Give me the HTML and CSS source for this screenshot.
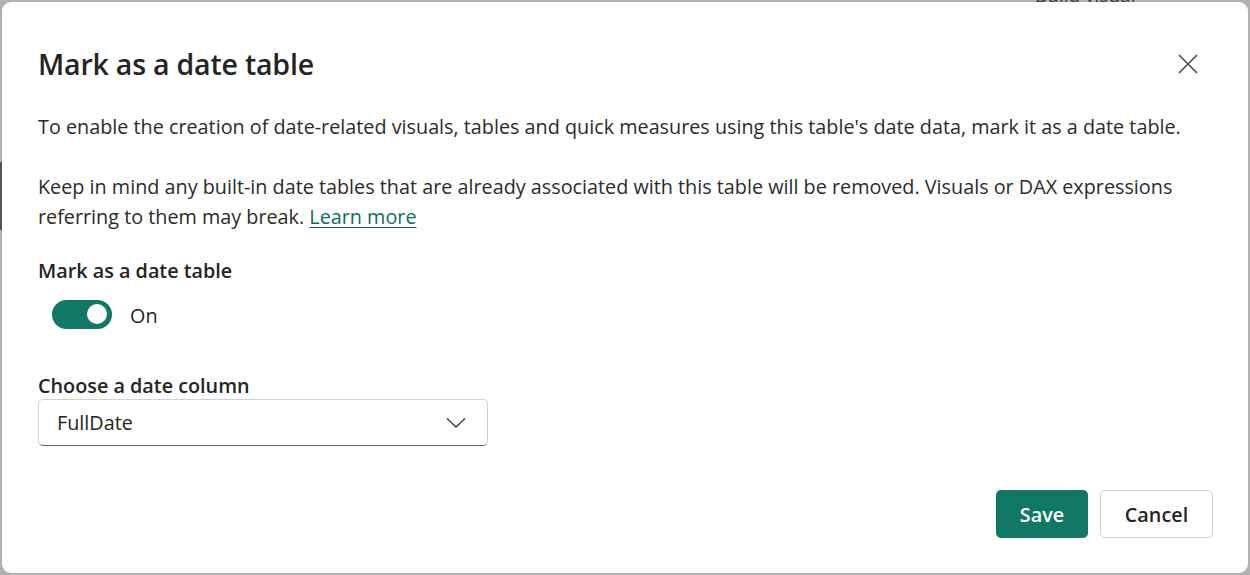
FILE: index.html
```html
<!DOCTYPE html>
<html lang="en">
<head>
<meta charset="utf-8">
<title>Mark as a date table</title>
<link rel="stylesheet" href="styles.css">
</head>
<body>
<div class="backdrop">
  <div class="backdrop-bar">
    <span class="backdrop-text">Build visual</span>
  </div>
  <div class="backdrop-left"></div>
</div>
<div class="dialog" role="dialog" aria-labelledby="dlg-title">
  <header class="dialog-header">
    <h1 id="dlg-title" class="dialog-title">Mark as a date table</h1>
    <button class="close-btn" aria-label="Close">
      <svg width="20" height="20" viewBox="0 0 20 20"><path d="M1 1 L19 19 M19 1 L1 19" stroke="#424242" stroke-width="1.5" fill="none"/></svg>
    </button>
  </header>
  <div class="dialog-body">
    <p class="text">To enable the creation of date-related visuals, tables and quick measures using this table's date data, mark it as a date table.</p>
    <p class="text">Keep in mind any built-in date tables that are already associated with this table will be removed. Visuals or DAX expressions referring to them may break. <a class="link" href="#">Learn more</a></p>
    <div class="field">
      <div class="label">Mark as a date table</div>
      <div class="toggle-row">
        <span class="toggle"><span class="knob"></span></span>
        <span class="toggle-text">On</span>
      </div>
    </div>
    <div class="field field-select">
      <div class="label">Choose a date column</div>
      <div class="select">
        <span class="select-value">FullDate</span>
        <svg class="chevron" width="20" height="12" viewBox="0 0 20 12"><path d="M1 1.5 L10 10 L19 1.5" stroke="#424242" stroke-width="1.5" fill="none"/></svg>
      </div>
    </div>
  </div>
  <footer class="dialog-footer">
    <button class="btn btn-primary">Save</button>
    <button class="btn btn-secondary">Cancel</button>
  </footer>
</div>
</body>
</html>
```
FILE: styles.css
```css
* { box-sizing: border-box; }
html, body { margin: 0; padding: 0; }
body {
  width: 1250px;
  height: 575px;
  background: #b1b1b1;
  font-family: "Open Sans", "Noto Sans", sans-serif;
  color: #242424;
  overflow: hidden;
  position: relative;
  padding: 2px;
}
.backdrop {
  position: absolute;
  inset: 0;
  z-index: 0;
}
.backdrop-bar {
  position: absolute;
  top: -14px;
  left: 1035px;
  height: 18px;
  font-size: 19px;
  line-height: 18px;
  color: #3a3a3a;
}
.backdrop-left {
  position: absolute;
  left: 0;
  top: 162px;
  width: 2px;
  height: 68px;
  background: #555;
}
.dialog {
  position: relative;
  z-index: 1;
  width: 1246px;
  height: 571px;
  background: #fff;
  border-radius: 9px;
  display: flex;
  flex-direction: column;
  padding: 44px 35px 0 36px;
}
.dialog-header {
  display: flex;
  align-items: center;
  justify-content: space-between;
}
.dialog-title {
  margin: 0;
  font-size: 28.5px;
  line-height: 36px;
  font-weight: 600;
  letter-spacing: -0.2px;
}
.close-btn {
  background: none;
  border: 0;
  padding: 0;
  width: 20px;
  height: 20px;
  margin-right: 15px;
  display: flex;
}
.dialog-body { display: flex; flex-direction: column; }
.text {
  margin: 0;
  font-size: 19.8px;
  line-height: 30px;
  color: #2b2b2b;
}
.text:first-child { margin-top: 30px; }
.text + .text { margin-top: 30px; }
.link { color: #0f6e5d; text-decoration: underline; text-underline-offset: 3px; }
.field { display: flex; flex-direction: column; }
.label {
  font-size: 19.8px;
  font-weight: 600;
  line-height: 26px;
  margin-top: 26px;
}
.toggle-row {
  display: flex;
  align-items: center;
  margin-top: 15px;
  margin-left: 14px;
}
.toggle {
  width: 60px;
  height: 29px;
  border-radius: 15px;
  background: #117865;
  display: flex;
  align-items: center;
  justify-content: flex-end;
  padding-right: 5px;
}
.knob {
  width: 20px;
  height: 20px;
  border-radius: 50%;
  background: #fff;
}
.toggle-text { font-size: 19.8px; margin-left: 18px; margin-top: 3px; }
.field-select .label { margin-top: 44px; }
.select {
  width: 450px;
  height: 47px;
  border: 1px solid #d1d1d1;
  border-bottom-color: #616161;
  border-radius: 5px;
  display: flex;
  align-items: center;
  justify-content: space-between;
  padding: 0 21px 0 18px;
}
.select-value { font-size: 19.8px; }
.dialog-footer {
  margin-top: auto;
  margin-bottom: 35px;
  display: flex;
  justify-content: flex-end;
  gap: 12px;
}
.btn {
  height: 48px;
  border-radius: 5px;
  font-family: inherit;
  font-size: 19.8px;
  font-weight: 600;
  padding: 0;
}
.btn-primary {
  width: 92px;
  background: #117865;
  color: #fff;
  border: 0;
}
.btn-secondary {
  width: 113px;
  background: #fff;
  color: #242424;
  border: 1px solid #d1d1d1;
}
```
